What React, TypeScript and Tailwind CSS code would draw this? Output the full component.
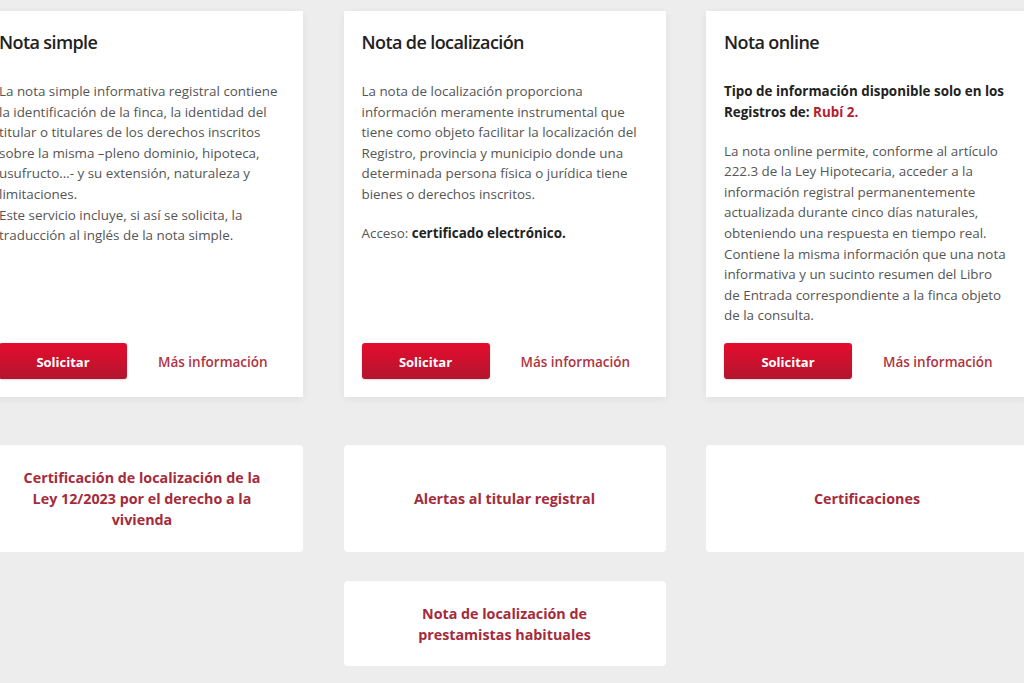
import React from "react";

const font = "font-['Open_Sans','Liberation_Sans',sans-serif]";

function Buttons() {
  return (
    <div className="mt-auto flex items-center pt-[17px]">
      <button className="h-[36px] w-[128px] rounded-[3px] bg-gradient-to-b from-[#e50b2c] to-[#b3142f] pt-[3px] text-[13px] font-bold text-white shadow-[0_1px_2px_rgba(0,0,0,0.15)]">
        Solicitar
      </button>
      <a className="ml-[31px] mt-[3px] text-[13.5px] font-semibold text-[#b03341]">Más información</a>
    </div>
  );
}

function BigCard({ title, children }: { title: string; children: React.ReactNode }) {
  return (
    <div className="flex flex-col bg-white p-[18px] shadow-[0_2px_8px_rgba(0,0,0,0.06)]">
      <h2 className="text-[18px] font-semibold leading-[26px] tracking-[-0.6px] text-[#222]">{title}</h2>
      <div className="mt-[26px] text-[13.4px] leading-[20.6px] text-[#555]">{children}</div>
      <Buttons />
    </div>
  );
}

function LinkCard({ children, h }: { children: React.ReactNode; h: string }) {
  return (
    <div className={`flex items-center justify-center rounded-[4px] bg-white px-[32px] text-center text-[14.3px] font-bold leading-[21px] text-[#a52b3b] ${h}`}>
      <span>{children}</span>
    </div>
  );
}

export default function App() {
  return (
    <div className={`min-h-[683px] overflow-hidden bg-[#ededed] ${font}`}>
      <div className="ml-[-19px] w-[1047px] pt-[11px]">
        <div className="grid grid-cols-[322px_322px_322px] gap-x-[40.5px]">
          <BigCard title="Nota simple">
            <p>
              La nota simple informativa registral contiene la identificación de la finca, la identidad del titular o
              titulares de los derechos inscritos sobre la misma –pleno dominio, hipoteca, usufructo…- y su extensión,
              naturaleza y limitaciones.
              <br />
              Este servicio incluye, si así se solicita, la traducción al inglés de la nota simple.
            </p>
          </BigCard>
          <BigCard title="Nota de localización">
            <p>
              La nota de localización proporciona información meramente instrumental que tiene como objeto facilitar la
              localización del Registro, provincia y municipio donde una determinada persona física o jurídica tiene
              bienes o derechos inscritos.
            </p>
            <p className="mt-[18.5px]">
              Acceso: <strong className="font-bold text-[#222]">certificado electrónico.</strong>
            </p>
          </BigCard>
          <BigCard title="Nota online">
            <p className="font-bold text-[#222]">
              Tipo de información disponible solo en los Registros de: <span className="text-[#b4202f]">Rubí 2.</span>
            </p>
            <p className="mt-[18.5px]">
              La nota online permite, conforme al artículo 222.3 de la Ley Hipotecaria, acceder a la información
              registral permanentemente actualizada durante cinco días naturales, obteniendo una respuesta en tiempo
              real. Contiene la misma información que una nota informativa y un sucinto resumen del Libro de Entrada
              correspondiente a la finca objeto de la consulta.
            </p>
          </BigCard>
        </div>
        <div className="mt-[48px] grid grid-cols-[322px_322px_322px] gap-x-[40.5px]">
          <LinkCard h="h-[107px]">
            Certificación de localización de la Ley 12/2023 por el derecho a la vivienda
          </LinkCard>
          <LinkCard h="h-[107px]">Alertas al titular registral</LinkCard>
          <LinkCard h="h-[107px]">Certificaciones</LinkCard>
        </div>
        <div className="mt-[29px] grid grid-cols-[322px_322px_322px] gap-x-[40.5px]">
          <div />
          <LinkCard h="h-[85px]">
            Nota de localización de
            <br />
            prestamistas habituales
          </LinkCard>
          <div />
        </div>
      </div>
    </div>
  );
}
